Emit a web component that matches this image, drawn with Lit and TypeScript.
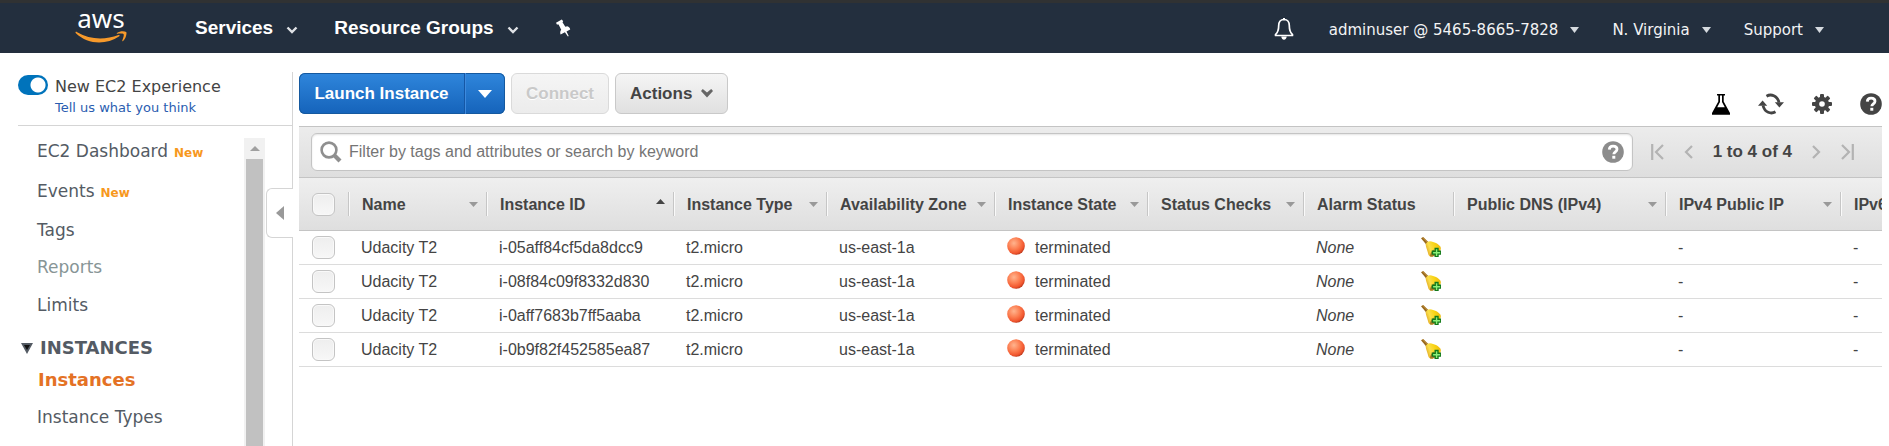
import { LitElement, html, css, svg, nothing } from "lit";
import { customElement, property } from "lit/decorators.js";
import { classMap } from "lit/directives/class-map.js";

interface Column {
  label: string;
  width?: number;
  sort?: "up" | "down";
}

interface Instance {
  name: string;
  id: string;
  type: string;
  zone: string;
  state: string;
}

interface NavItem {
  label: string;
  fresh?: boolean;
  muted?: boolean;
  active?: boolean;
}

const columns: Column[] = [
  { label: "Name", width: 138, sort: "down" },
  { label: "Instance ID", width: 187, sort: "up" },
  { label: "Instance Type", width: 153, sort: "down" },
  { label: "Availability Zone", width: 168, sort: "down" },
  { label: "Instance State", width: 153, sort: "down" },
  { label: "Status Checks", width: 156, sort: "down" },
  { label: "Alarm Status", width: 150 },
  { label: "Public DNS (IPv4)", width: 212, sort: "down" },
  { label: "IPv4 Public IP", width: 175, sort: "down" },
  { label: "IPv6 IPs" },
];

const instances: Instance[] = [
  "i-05aff84cf5da8dcc9",
  "i-08f84c09f8332d830",
  "i-0aff7683b7ff5aaba",
  "i-0b9f82f452585ea87",
].map((id) => ({ name: "Udacity T2", id, type: "t2.micro", zone: "us-east-1a", state: "terminated" }));

const generalLinks: NavItem[] = [
  { label: "EC2 Dashboard", fresh: true },
  { label: "Events", fresh: true },
  { label: "Tags" },
  { label: "Reports", muted: true },
  { label: "Limits" },
];

const instanceLinks: NavItem[] = [{ label: "Instances", active: true }, { label: "Instance Types" }];

const chevron = html`<svg width="12" height="8" viewBox="0 0 12 8" aria-hidden="true">
  <path d="M1.5 1.500 6 6l4.500-4.500" fill="none" stroke="currentColor" stroke-width="2.400" />
</svg>`;

const caret = html`<svg width="9" height="6" viewBox="0 0 9 6" aria-hidden="true">
  <path d="M0 0h9L4.500 6z" fill="currentColor" />
</svg>`;

const helpIcon = html`<svg width="22" height="22" viewBox="0 0 22 22" aria-hidden="true">
  <circle cx="11" cy="11" r="10.800" fill="currentColor" />
  <path d="M7.300 8.600C7.400 6.200 9 5.200 11.100 5.200c2.200 0 3.900 1.200 3.900 3.100 0 2.500-3.200 2.700-3.200 5" fill="none" stroke="#fff" stroke-width="2.800" />
  <rect x="10.300" y="14.800" width="3" height="2.900" fill="#fff" />
</svg>`;

@customElement("console-header")
class ConsoleHeader extends LitElement {
  static styles = css`
    :host {
      display: block;
    }
    .bar {
      display: flex;
      align-items: center;
      justify-content: space-between;
      box-sizing: border-box;
      height: 53px;
      padding: 0 65px 0 75px;
      border-top: 3px solid #303233;
      background: #232f3e;
      color: #fff;
    }
    .group {
      display: flex;
      align-items: center;
    }
    .left {
      gap: 36px;
    }
    .right {
      gap: 33px;
    }
    .logo {
      display: flex;
      flex-direction: column;
      align-items: center;
      width: 52px;
      margin-right: 32px;
      color: #fff;
      text-decoration: none;
      font: 26px/26px "Noto Sans", "Open Sans", sans-serif;
    }
    .word {
      margin-top: -8px;
    }
    button {
      display: flex;
      align-items: center;
      padding: 0;
      border: 0;
      background: none;
      color: inherit;
      white-space: nowrap;
    }
    .main {
      gap: 13px;
      font: bold 19px/24px "Liberation Sans", Arial, sans-serif;
    }
    .main svg {
      margin-top: 4px;
      color: #dfe2e6;
    }
    .main .pin {
      margin-top: 0;
    }
    .sub {
      gap: 12px;
      padding-top: 4px;
      font: 15px/20px "DejaVu Sans", Verdana, sans-serif;
      color: #f2f3f4;
    }
    .sub svg {
      color: #d5dadf;
    }
    .sub .bell {
      margin: -2px 2px 0 0;
    }
  `;

  render() {
    return html`<header class="bar">
      <nav class="group left" aria-label="Services">
        <a class="logo" href="#home">
          <span class="word">aws</span>
          <svg width="52" height="12" viewBox="0 0 52 12" aria-hidden="true">
            <path d="M.5 1.300C.8.600 1.500.7 2.200 1.200 15 8.800 30 9.100 43.500 4c1.100-.4 1.700.6.800 1.300C31 14.200 13 13.800.9 2.300.5 1.900.4 1.600.5 1.300z" fill="#f79a2b" />
            <path d="M42 1.900C44.500.1 49 -.2 51.200.9c.9 1.100-.2 6.600-3.100 9-.7.5-1 .1-.8-.5.8-2.200 1.900-5.200 1.300-6.100-.7-.8-3.700-.8-6-.5-.9.100-1.200-.4-.6-.9z" fill="#f79a2b" />
          </svg>
        </a>
        <button class="main">Services ${chevron}</button>
        <button class="main">Resource Groups ${chevron}</button>
        <button class="main" aria-label="Pin shortcuts">
          <svg class="pin" width="17" height="18" viewBox="0 0 17 18" aria-hidden="true">
            <path d="M1 3.800 6.800.4 8.200 2.300 7.500 3.200 10.300 7.700 12.300 7.300c1.600.5 2.700 1.700 2.900 3.100l-3.700 2.100 2.200 4.500-.8.500-3-4.200-4.300 2.300c-.7-1.700-.4-3.500.6-4.900L3.600 5.500 1.900 5.600z" fill="#fff" />
          </svg>
        </button>
      </nav>
      <div class="group right">
        <button class="sub" aria-label="Notifications">
          <svg class="bell" width="20" height="22" viewBox="0 0 20 22" aria-hidden="true">
            <path d="M10 1.500C6.300 1.500 4.700 4.300 4.700 7.500c0 5-1 7.100-3.200 9.200v.8h17v-.8c-2.200-2.100-3.200-4.200-3.200-9.200 0-3.200-1.600-6-5.300-6z" fill="none" stroke="#fff" stroke-width="1.700" stroke-linejoin="round" />
            <path d="M9 0h2v2H9zM7.300 18.500h5.400c-.1 2-1.200 3.200-2.700 3.200s-2.600-1.200-2.700-3.200z" fill="#fff" />
          </svg>
        </button>
        <button class="sub">adminuser @ 5465-8665-7828 ${caret}</button>
        <button class="sub">N. Virginia ${caret}</button>
        <button class="sub">Support ${caret}</button>
      </div>
    </header>`;
  }
}

@customElement("console-sidebar")
class ConsoleSidebar extends LitElement {
  static styles = css`
    :host {
      display: flex;
      flex-direction: column;
      position: relative;
      box-sizing: border-box;
      width: 293px;
      flex: none;
      margin-top: 19px;
      border-right: 1px solid #d5d5d5;
      font-family: "DejaVu Sans", Verdana, sans-serif;
      color: #545b64;
    }
    .experience {
      display: flex;
      gap: 7px;
      height: 53px;
      margin-left: 18px;
      border-bottom: 1px solid #d5d5d5;
      color: #444;
    }
    .toggle {
      appearance: none;
      flex: none;
      width: 30px;
      height: 20px;
      margin: 3px 0 0;
      border-radius: 10px;
      background: radial-gradient(circle at 20px 10px, #fff 7px, #0073bb 8px);
    }
    .caption {
      display: flex;
      flex-direction: column;
    }
    .caption label {
      padding-top: 3px;
      font-size: 16px;
      line-height: 24px;
    }
    .caption a {
      font-size: 13px;
      line-height: 18px;
      color: #2a5db0;
      text-decoration: none;
    }
    .body {
      display: flex;
      justify-content: space-between;
      flex: 1;
      min-height: 0;
      overflow: hidden;
    }
    ul {
      margin: 0;
      padding: 0;
      list-style: none;
    }
    .links {
      padding: 5px 0 0 21px;
    }
    .item {
      display: flex;
      align-items: center;
      gap: 6px;
      height: 37px;
      padding-left: 16px;
      font-size: 17px;
    }
    .item a {
      color: inherit;
      text-decoration: none;
    }
    .fresh {
      height: 40px;
    }
    .muted {
      height: 38px;
      color: #879596;
    }
    .active {
      padding-left: 17px;
      font-size: 18px;
      font-weight: bold;
      color: #e47225;
    }
    .tag {
      padding-top: 3px;
      font-size: 12px;
      font-weight: bold;
      color: #f7981d;
    }
    .section {
      display: flex;
      align-items: center;
      gap: 7px;
      height: 26px;
      margin-top: 12px;
      padding: 0;
      border: 0;
      background: none;
      font: bold 18px/24px "DejaVu Sans", Verdana, sans-serif;
      color: #545b64;
    }
    .scroll {
      display: flex;
      flex-direction: column;
      align-items: center;
      width: 21px;
      margin: 12px 27px 0 0;
      background: #f1f1f1;
    }
    .arrow {
      display: flex;
      align-items: center;
      height: 21px;
    }
    .thumb {
      flex: 1;
      width: 17px;
      background: #c1c1c1;
    }
    .collapse {
      position: absolute;
      top: 116px;
      right: -1px;
      display: flex;
      align-items: center;
      justify-content: center;
      width: 27px;
      height: 50px;
      padding: 0;
      border: 1px solid #d5d5d5;
      border-right: 0;
      border-radius: 6px 0 0 6px;
      background: #fff;
    }
  `;

  private item(link: NavItem) {
    return html`<li class=${classMap({ item: true, fresh: !!link.fresh, muted: !!link.muted, active: !!link.active })}>
      <a href="#${link.label}">${link.label}</a>${link.fresh ? html`<span class="tag">New</span>` : nothing}
    </li>`;
  }

  render() {
    return html`
      <div class="experience">
        <input class="toggle" id="experience" type="checkbox" role="switch" checked />
        <div class="caption">
          <label for="experience">New EC2 Experience</label>
          <a href="#feedback">Tell us what you think</a>
        </div>
      </div>
      <div class="body">
        <nav class="links" aria-label="EC2">
          <ul>
            ${generalLinks.map((link) => this.item(link))}
          </ul>
          <button class="section" aria-expanded="true">
            <svg width="12" height="11" viewBox="0 0 12 11" aria-hidden="true">
              <path d="M0 0h12L6 11z" fill="#545b64" />
              <path d="M3 2h6L6 7z" fill="#111" />
            </svg>
            INSTANCES
          </button>
          <ul>
            ${instanceLinks.map((link) => this.item(link))}
          </ul>
        </nav>
        <div class="scroll" aria-hidden="true">
          <div class="arrow">
            <svg width="10" height="5" viewBox="0 0 10 5"><path d="M0 5h10L5 0z" fill="#a0a0a0" /></svg>
          </div>
          <div class="thumb"></div>
        </div>
      </div>
      <button class="collapse" aria-label="Collapse navigation">
        <svg width="8" height="14" viewBox="0 0 8 14" aria-hidden="true"><path d="M8 0v14L0 7z" fill="#999" /></svg>
      </button>
    `;
  }
}

@customElement("instance-table")
class InstanceTable extends LitElement {
  @property({ attribute: false }) rows: Instance[] = [];

  static styles = css`
    :host {
      display: block;
      overflow: hidden;
      font: 16px/20px "Liberation Sans", Arial, sans-serif;
      color: #444;
    }
    table {
      width: 100%;
      table-layout: fixed;
      border-collapse: separate;
      border-spacing: 0;
    }
    .pick {
      width: 49px;
    }
    thead tr {
      background: linear-gradient(#efefef, #dedede);
    }
    th {
      height: 52px;
      padding: 0;
      border-bottom: 1px solid #c4c4c4;
      text-align: left;
      white-space: nowrap;
      overflow: hidden;
    }
    .head {
      display: flex;
      align-items: center;
      justify-content: space-between;
      height: 24px;
      padding: 0 8px 0 13px;
      border-left: 1px solid #c6c6c6;
      box-shadow: inset 1px 0 #fafafa;
    }
    .label {
      padding-top: 2px;
    }
    .down {
      color: #999;
    }
    .up {
      margin-bottom: 5px;
      color: #444;
    }
    td {
      height: 33px;
      padding: 0 0 0 13px;
      border-bottom: 1px solid #dcdcdc;
      white-space: nowrap;
      overflow: hidden;
    }
    .check {
      padding: 0 0 0 13px;
    }
    .box {
      appearance: none;
      display: block;
      box-sizing: border-box;
      width: 23px;
      height: 23px;
      margin: 0;
      border: 1px solid #c4c4c4;
      border-radius: 6px;
      background: linear-gradient(#eeeeee, #f7f7f7);
      box-shadow: inset 0 0 0 1px #f9f9f9;
    }
    .state {
      display: flex;
      align-items: center;
      gap: 10px;
    }
    .state svg {
      margin-bottom: 3px;
    }
    .alarm {
      display: flex;
      align-items: center;
      justify-content: space-between;
      padding-right: 12px;
      font-style: italic;
    }
    .add {
      display: flex;
      padding: 0;
      margin-bottom: 2px;
      border: 0;
      background: none;
    }
  `;

  private head(column: Column) {
    const icon = svg`<path d=${column.sort === "up" ? "M0 5h9L4.500 0z" : "M0 0h9L4.500 5z"} fill="currentColor" />`;
    return html`<th scope="col">
      <div class="head">
        <span class="label">${column.label}</span>
        ${column.sort ? html`<svg class=${column.sort} width="9" height="5" viewBox="0 0 9 5" aria-hidden="true">${icon}</svg>` : nothing}
      </div>
    </th>`;
  }

  private row(instance: Instance) {
    return html`<tr>
      <td class="check"><input class="box" type="checkbox" aria-label="Select ${instance.id}" /></td>
      <td>${instance.name}</td>
      <td>${instance.id}</td>
      <td>${instance.type}</td>
      <td>${instance.zone}</td>
      <td>
        <div class="state">
          <svg width="18" height="18" viewBox="0 0 18 18" aria-hidden="true">
            <defs>
              <radialGradient id="ball" cx=".38" cy=".34" r=".7">
                <stop offset="0" stop-color="#ffb48e" />
                <stop offset=".5" stop-color="#fc7d50" />
                <stop offset=".82" stop-color="#f1562e" />
                <stop offset="1" stop-color="#b8371c" />
              </radialGradient>
            </defs>
            <circle cx="9" cy="9" r="8.800" fill="url(#ball)" />
          </svg>
          ${instance.state}
        </div>
      </td>
      <td></td>
      <td>
        <div class="alarm">
          None
          <button class="add" aria-label="Add alarm to ${instance.id}">
            <svg width="20" height="20" viewBox="0 0 20 20" aria-hidden="true">
              <defs>
                <linearGradient id="bell" x1="0" y1=".6" x2="1" y2=".2">
                  <stop offset="0" stop-color="#e0a520" />
                  <stop offset=".3" stop-color="#fbe04c" />
                  <stop offset=".65" stop-color="#f9d312" />
                  <stop offset="1" stop-color="#e8b40f" />
                </linearGradient>
              </defs>
              <path d="M0 1.200 2.200 0 7.600 5.200 5.200 7.400z" fill="#9a6a1d" />
              <path d="M1.500.6 2.300.2 7 5 6.400 5.600z" fill="#c89a4a" />
              <path d="M4.600 7.200C5.500 5.400 7.200 4.200 9 4.200c4 .8 8.500 2.200 10.500 5.600.6 1.600.4 3-.5 4.200L11.500 19.600C9.500 19.800 8 19 7.400 17.400 6.800 14 4.800 10.500 4.600 7.200z" fill="url(#bell)" />
              <path d="M9 19.500c-.3-2.500 1.500-5.400 4-7l1 6-2.500 1.300z" fill="#a87a26" />
              <path d="M14.200 11.500h2.800v2.800h2.800v2.800h-2.800v2.700h-2.800v-2.700h-2.800v-2.800h2.800z" fill="#8df07a" stroke="#13791a" stroke-width="1.400" />
            </svg>
          </button>
        </div>
      </td>
      <td></td>
      <td>-</td>
      <td>-</td>
    </tr>`;
  }

  render() {
    return html`<table>
      <colgroup>
        <col class="pick" />
        ${columns.map((column) => html`<col width=${column.width ?? nothing} />`)}
      </colgroup>
      <thead>
        <tr>
          <th class="check"><input class="box" type="checkbox" aria-label="Select all instances" /></th>
          ${columns.map((column) => this.head(column))}
        </tr>
      </thead>
      <tbody>
        ${this.rows.map((instance) => this.row(instance))}
      </tbody>
    </table>`;
  }
}

@customElement("app-root")
class AppRoot extends LitElement {
  static styles = css`
    :host {
      display: flex;
      flex-direction: column;
      height: 100vh;
      overflow: hidden;
      background: #fff;
      font: 16px/20px "Liberation Sans", Arial, sans-serif;
      color: #444;
    }
    .page {
      display: flex;
      flex: 1;
      min-height: 0;
    }
    main {
      flex: 1;
      min-width: 0;
      padding: 20px 7px 0 6px;
    }
    button {
      padding: 0;
      border: 0;
      background: none;
      color: inherit;
      font: inherit;
    }
    .actions,
    .launch,
    .tools,
    .filter,
    .search,
    .pager {
      display: flex;
      align-items: center;
    }
    .actions {
      justify-content: space-between;
      height: 53px;
      align-items: flex-start;
    }
    .buttons {
      display: flex;
      gap: 6px;
      font-size: 17px;
      font-weight: bold;
    }
    .buttons button {
      display: flex;
      align-items: center;
      justify-content: center;
      box-sizing: border-box;
      height: 41px;
    }
    .launch {
      box-sizing: border-box;
      border-radius: 6px;
      background: linear-gradient(#2f86dc, #1563ba);
      box-shadow: inset 0 0 0 1px #15599f;
      color: #fff;
      text-shadow: 0 -1px #1457a5;
    }
    .launch .primary {
      width: 166px;
      border-right: 1px solid #1557a5;
    }
    .launch .more {
      width: 40px;
      box-shadow: inset 1px 0 #3d8ade;
    }
    .buttons .plain {
      gap: 9px;
      padding: 0 14px;
      border: 1px solid #c9c9c9;
      border-radius: 6px;
      background: linear-gradient(#f5f5f5, #e0e0e0);
    }
    .buttons .plain:disabled {
      border-color: #dadada;
      background: linear-gradient(#f5f5f5, #ececec);
      color: #c9c9c9;
      text-shadow: 0 1px #fff;
    }
    .tools {
      gap: 28px;
      padding-top: 20px;
    }
    .tools button,
    .pager button,
    .search button {
      display: flex;
    }
    .filter {
      gap: 18px;
      height: 50px;
      padding: 0 28px 0 12px;
      border-top: 1px solid #c4c4c4;
      border-bottom: 1px solid #c4c4c4;
      background: linear-gradient(#ececec, #dedede);
    }
    .search {
      flex: 1;
      gap: 7px;
      box-sizing: border-box;
      height: 38px;
      padding: 0 8px;
      border: 1px solid #c4c4c4;
      border-radius: 6px;
      background: #fff;
      box-shadow: inset 0 1px 2px #e4e4e4;
      color: #8c8c8c;
    }
    .search input {
      flex: 1;
      min-width: 0;
      padding: 0;
      border: 0;
      outline: 0;
      background: none;
      font: 16px/20px "Liberation Sans", Arial, sans-serif;
    }
    .search input::placeholder {
      color: #757575;
      opacity: 1;
    }
    .pager {
      gap: 20px;
      color: #b3b3b3;
    }
    .count {
      font-size: 17px;
      font-weight: bold;
      color: #444;
    }
  `;

  render() {
    return html`
      <console-header></console-header>
      <div class="page">
        <console-sidebar></console-sidebar>
        <main>
          <div class="actions">
            <div class="buttons">
              <div class="launch">
                <button class="primary">Launch Instance</button>
                <button class="more" aria-label="More launch options">
                  <svg width="14" height="8" viewBox="0 0 14 8" aria-hidden="true"><path d="M0 0h14L7 8z" fill="#fff" /></svg>
                </button>
              </div>
              <button class="plain" disabled>Connect</button>
              <button class="plain">
                Actions
                <svg width="12" height="9" viewBox="0 0 12 9" aria-hidden="true">
                  <path d="M0 2 1.800 0 6 3.500 10.200 0 12 2 6 8.600z" fill="#666" />
                </svg>
              </button>
            </div>
            <div class="tools">
              <button aria-label="Experiments">
                <svg width="18" height="21" viewBox="0 0 18 21" aria-hidden="true">
                  <path d="M5 0h8v1.600h-1.300v6L18 19v1.800H0V19L6.300 7.600v-6H5z" fill="#000" />
                  <path d="M8 1.600h2v6.500l2.800 5.200H5.200L8 8.100z" fill="#fff" />
                </svg>
              </button>
              <button aria-label="Refresh">
                <svg width="26" height="22" viewBox="0 0 26 22" aria-hidden="true">
                  <path d="M8.500 3.200C13 .6 19.300 2.400 21 9.500M17.500 18.800C13 21.400 6.700 19.600 5 12.500" fill="none" stroke="#444" stroke-width="2.800" />
                  <path d="M16.800 9.200H26L21.400 14.600zM0 12.800 4.600 7.400 9.200 12.800z" fill="#444" />
                </svg>
              </button>
              <button aria-label="Settings">
                <svg width="20" height="20" viewBox="0 0 20 20" aria-hidden="true">
                  <g fill="#444">
                    <rect x="8" y="0" width="4" height="20" rx="1" />
                    <rect x="8" y="0" width="4" height="20" rx="1" transform="rotate(45 10 10)" />
                    <rect x="8" y="0" width="4" height="20" rx="1" transform="rotate(90 10 10)" />
                    <rect x="8" y="0" width="4" height="20" rx="1" transform="rotate(135 10 10)" />
                    <circle cx="10" cy="10" r="7.200" />
                  </g>
                  <circle cx="10" cy="10" r="2.800" fill="#fff" />
                </svg>
              </button>
              <button aria-label="Help">${helpIcon}</button>
            </div>
          </div>
          <div class="filter">
            <div class="search">
              <svg width="22" height="22" viewBox="0 0 22 22" aria-hidden="true">
                <circle cx="9" cy="9" r="7.400" fill="none" stroke="#8f8f8f" stroke-width="2.600" />
                <path d="m14.300 14.300 5.700 5.700" stroke="#8f8f8f" stroke-width="4.200" />
              </svg>
              <input type="search" aria-label="Filter instances" placeholder="Filter by tags and attributes or search by keyword" />
              <button aria-label="Filter help">${helpIcon}</button>
            </div>
            <div class="pager">
              <button aria-label="First page">
                <svg width="13" height="16" viewBox="0 0 13 16" aria-hidden="true"><path d="M1.200 0v16M12 1 5 8l7 7" fill="none" stroke="currentColor" stroke-width="2.200" /></svg>
              </button>
              <button aria-label="Previous page">
                <svg width="9" height="14" viewBox="0 0 9 14" aria-hidden="true"><path d="M8 1 2 7l6 6" fill="none" stroke="currentColor" stroke-width="2.200" /></svg>
              </button>
              <span class="count">1 to 4 of 4</span>
              <button aria-label="Next page">
                <svg width="9" height="14" viewBox="0 0 9 14" aria-hidden="true"><path d="m1 1 6 6-6 6" fill="none" stroke="currentColor" stroke-width="2.200" /></svg>
              </button>
              <button aria-label="Last page">
                <svg width="13" height="16" viewBox="0 0 13 16" aria-hidden="true"><path d="M11.800 0v16M1 1l7 7-7 7" fill="none" stroke="currentColor" stroke-width="2.200" /></svg>
              </button>
            </div>
          </div>
          <instance-table .rows=${instances}></instance-table>
        </main>
      </div>
    `;
  }
}
